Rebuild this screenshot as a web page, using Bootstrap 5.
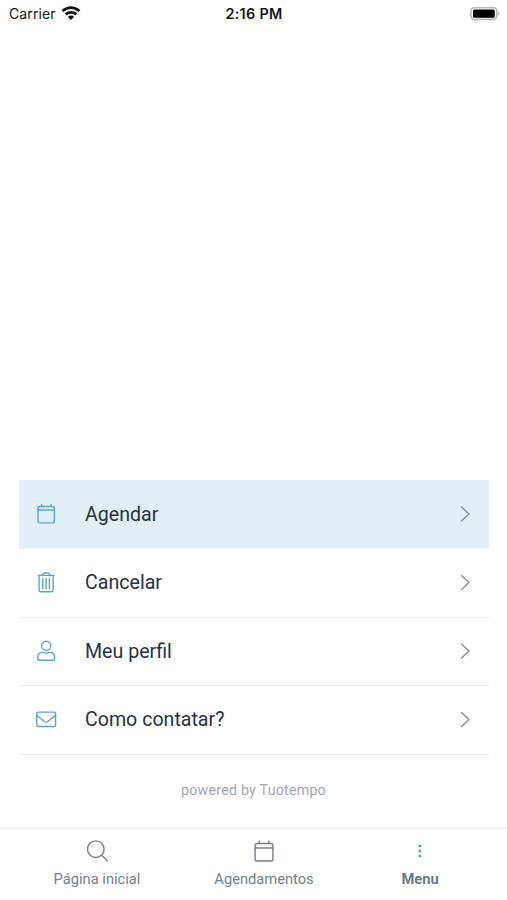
<!DOCTYPE html>
<html lang="pt-BR">
<head>
<meta charset="utf-8">
<meta name="viewport" content="width=device-width, initial-scale=1">
<title>Menu</title>
<link href="https://cdn.jsdelivr.net/npm/bootstrap@5.3.0/dist/css/bootstrap.min.css" rel="stylesheet">
<style>
body { font-family: Roboto, sans-serif; color: #253343; background: #fff; }
svg { display: block; flex: none; fill: none; stroke: currentColor; stroke-width: 1.4; stroke-linecap: round; stroke-linejoin: round; }
.status { height: 28px; padding: 0 7px 0 9px; font: 14px/28px Inter, sans-serif; letter-spacing: .12px; color: #161616; display: grid; grid-template-columns: 1fr auto 1fr; }
.clock { font-weight: 600; font-size: 14.4px; letter-spacing: .3px; margin-left: -1px; }
.wifi { stroke-width: 2.7; stroke-linecap: butt; color: #111; }
.options { margin: 0 18px 0 19px; }
.options .list-group-item { height: 68.5px; padding: 0 16px; gap: 28px; border-color: #ececef; color: #253343; font-size: 19.6px; line-height: 24px; }
.options .list-group-item span { padding-top: 1px; }
.options .list-group-item:first-child { height: 69px; background: #e3eff7; border-color: #e9f1f5; }
.options .list-group-item:last-child { border-bottom: 1px solid #ececef; }
.symbol { color: #5ba4d9; }
.chevron { color: #87919b; margin-right: -2px; }
.powered { color: #a3a8ad; font-size: 14.2px; line-height: 20px; letter-spacing: .25px; margin: 25px 0 29.5px; }
.tabs { height: 71px; grid-template-columns: 194px 140px 172px; box-shadow: 0 -1px 2px rgba(0,0,0,.11); color: #75818d; font-size: 14.7px; line-height: 20px; }
.tabs a { color: inherit; padding-top: 11px; gap: 5px; }
.tabs a.active { font-weight: 700; color: #6b7886; }
</style>
</head>
<body>
<div class="vh-100 d-flex flex-column overflow-hidden">
  <header class="status align-items-center">
    <div class="d-flex align-items-center"><span>Carrier</span>
      <svg class="wifi ms-1" width="22" height="16" viewBox="0 0 22 16"><path d="M2.5 5Q11-1.8 19.5 5M5.6 8.4Q11 4.2 16.4 8.4"/><path d="M7.8 10.7Q11 8.2 14.2 10.7L11 13.9Z" fill="currentColor" stroke="none"/></svg>
    </div>
    <span class="clock">2:16 PM</span>
    <svg class="ms-auto" width="30" height="14" viewBox="0 0 30 14" stroke="none"><rect x="1" y=".6" width="25.8" height="11.8" rx="3.6" stroke="#b9b9b9" stroke-width="1.6"/><rect x="3" y="2.4" width="21.8" height="8.4" rx="1.5" fill="#000" stroke="none"/><path d="M28.1 4.6Q31 6.6 28.1 8.6Z" fill="#b5b5b5" stroke="none"/></svg>
  </header>
  <main class="mt-auto">
    <nav class="options list-group list-group-flush">
      <a href="#" class="list-group-item d-flex align-items-center">
        <svg class="symbol" width="22" height="22" viewBox="0 0 22 22"><rect x="3" y="3.5" width="16.4" height="16.4" rx="1.8"/><path d="M3 7H19.4M6.5 1.5V3.5M16 1.5V3.5"/></svg>
        <span class="flex-fill">Agendar</span>
        <svg class="chevron" width="18" height="18" viewBox="0 0 18 18"><path d="M4.5 2L12 9L4.5 16"/></svg>
      </a>
      <a href="#" class="list-group-item d-flex align-items-center">
        <svg class="symbol" width="22" height="22" viewBox="0 0 22 22"><path d="M3.3 3.4H19.1M4.1 3.4V17.8Q4.1 19.8 6.1 19.8H16.2Q18.2 19.8 18.2 17.8V3.4M7.3 3.2L8.6 1H13.8L15.1 3.2M7.8 6.4V16.7M11.1 6.4V16.7M14.4 6.4V16.7"/></svg>
        <span class="flex-fill">Cancelar</span>
        <svg class="chevron" width="18" height="18" viewBox="0 0 18 18"><path d="M4.5 1.5L12 8.5L4.5 15.5"/></svg>
      </a>
      <a href="#" class="list-group-item d-flex align-items-center">
        <svg class="symbol" width="22" height="22" viewBox="0 0 22 22"><circle cx="11.2" cy="5.8" r="4.6"/><path d="M7.4 12.4C8.9 12.4 9.2 13.1 11.2 13.1S13.5 12.4 15 12.4C17.9 12.4 19.6 14.5 19.6 17.1V18.4Q19.6 20.2 17.8 20.2H4.6Q2.8 20.2 2.8 18.4V17.1C2.8 14.5 4.5 12.4 7.4 12.4Z"/></svg>
        <span class="flex-fill">Meu perfil</span>
        <svg class="chevron" width="18" height="18" viewBox="0 0 18 18"><path d="M4.5 2L12 9L4.5 16"/></svg>
      </a>
      <a href="#" class="list-group-item d-flex align-items-center">
        <svg class="symbol" width="22" height="22" viewBox="0 0 22 22"><rect x="1.8" y="3.1" width="18.8" height="14.4" rx="1.6"/><path d="M1.9 6.5L10.2 13Q11.2 13.7 12.2 13L20.5 6.5"/></svg>
        <span class="flex-fill">Como contatar?</span>
        <svg class="chevron" width="18" height="18" viewBox="0 0 18 18"><path d="M4.5 1.5L12 8.5L4.5 15.5"/></svg>
      </a>
    </nav>
    <p class="powered text-center">powered by Tuotempo</p>
  </main>
  <nav class="tabs d-grid flex-shrink-0">
    <a href="#" class="d-flex flex-column align-items-center text-decoration-none">
      <svg width="24" height="24" viewBox="0 0 24 24"><circle cx="10.8" cy="9.2" r="8.3"/><path d="M16.7 15.2L22.3 20.7"/></svg>
      <span>Página inicial</span>
    </a>
    <a href="#" class="d-flex flex-column align-items-center text-decoration-none">
      <svg width="24" height="24" viewBox="0 0 24 24"><rect x="3.1" y="3.5" width="17.8" height="17.5" rx="1.8"/><path d="M3.1 8H20.9M7.3 1.3V3.5M16.8 1.3V3.5"/></svg>
      <span>Agendamentos</span>
    </a>
    <a href="#" class="active d-flex flex-column align-items-center text-decoration-none">
      <svg class="symbol" width="24" height="24" viewBox="0 0 24 24"><path d="M10.6 4.7h2.5v2.5h-2.5zM10.6 9.8h2.5v2.5h-2.5zM10.6 14.8h2.5v2.5h-2.5z" fill="#4c9fcb" stroke="none"/></svg>
      <span>Menu</span>
    </a>
  </nav>
</div>
<script src="https://cdn.jsdelivr.net/npm/bootstrap@5.3.0/dist/js/bootstrap.bundle.min.js"></script>
</body>
</html>
